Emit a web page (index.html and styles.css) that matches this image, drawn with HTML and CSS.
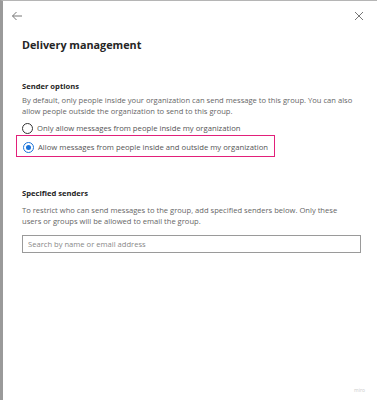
FILE: index.html
```html
<!DOCTYPE html>
<html>
<head>
<meta charset="utf-8">
<link rel="stylesheet" href="styles.css">
</head>
<body>
<div class="panel">
  <div class="topbar">
    <svg class="icon" width="12" height="12" viewBox="0 0 12 12"><path d="M11 6H1.5M5.5 2L1.5 6l4 4" fill="none" stroke="#777" stroke-width="1"/></svg>
    <svg class="icon" width="10" height="10" viewBox="0 0 10 10"><path d="M1 1l8 8M9 1L1 9" fill="none" stroke="#777" stroke-width="1"/></svg>
  </div>
  <div class="content">
    <h1 class="title">Delivery management</h1>
    <h2 class="section-title">Sender options</h2>
    <p class="desc">By default, only people inside your organization can send message to this group. You can also allow people outside the organization to send to this group.</p>
    <div class="radios">
      <label class="radio"><span class="dot"></span>Only allow messages from people inside my organization</label>
      <label class="radio highlight"><span class="dot on"></span>Allow messages from people inside and outside my organization</label>
    </div>
    <h2 class="section-title second">Specified senders</h2>
    <p class="desc second">To restrict who can send messages to the group, add specified senders below. Only these users or groups will be allowed to email the group.</p>
    <div class="search">Search by name or email address</div>
  </div>
  <div class="watermark">miro</div>
</div>
</body>
</html>
```
FILE: styles.css
```css
html, body { margin: 0; padding: 0; background: #fff; }
body {
  font-family: "Open Sans", "Noto Sans", sans-serif;
  color: #333;
  width: 377px;
  height: 400px;
  overflow: hidden;
}
.panel {
  box-sizing: border-box;
  width: 377px;
  height: 400px;
  border-left: 3px solid #9a9a9a;
  border-top: 1px solid #b5b5b5;
  position: relative;
}
.topbar {
  display: flex;
  justify-content: space-between;
  align-items: center;
  padding: 8px 13px 0 8px;
  height: 14px;
}
.content {
  padding: 0 16px 0 19px;
}
.title {
  font-size: 10.8px;
  font-weight: 700;
  color: #252525;
  margin: 14px 0 0 0;
  line-height: 16px;
}
.section-title {
  font-size: 7.6px;
  font-weight: 700;
  color: #252525;
  margin: 27px 0 0 0;
  line-height: 12px;
}
.section-title.second { margin-top: 30px; }
.desc {
  font-size: 7.6px;
  color: #666;
  line-height: 11px;
  margin: 3px 0 0 0;
}
.desc.second { margin-top: 6px; max-width: 318px; }
.radios {
  display: flex;
  flex-direction: column;
  gap: 0;
  margin-top: 5px;
}
.radio {
  display: flex;
  align-items: center;
  gap: 4px;
  font-size: 7.7px;
  color: #555;
  line-height: 13px;
  height: 13px;
}
.highlight {
  align-self: flex-start;
  margin-left: -6px;
  padding: 5px 6px 2px 6px;
  border: 1.5px solid #e2207a;
}
.dot {
  box-sizing: border-box;
  width: 11px;
  height: 11px;
  border-radius: 50%;
  border: 1px solid #333;
  flex: none;
  position: relative;
}
.dot.on { border-color: #1a73d9; }
.dot.on::after {
  content: "";
  position: absolute;
  left: 2px; top: 2px;
  width: 5px; height: 5px;
  border-radius: 50%;
  background: #1a73d9;
}
.search {
  margin-top: 8px;
  height: 18px;
  box-sizing: border-box;
  border: 1px solid #9a9a9a;
  font-size: 7.6px;
  color: #888;
  line-height: 16px;
  padding-left: 5px;
}
.watermark {
  position: absolute;
  right: 12px;
  bottom: 7px;
  font-size: 5px;
  color: #ccc;
}
```
